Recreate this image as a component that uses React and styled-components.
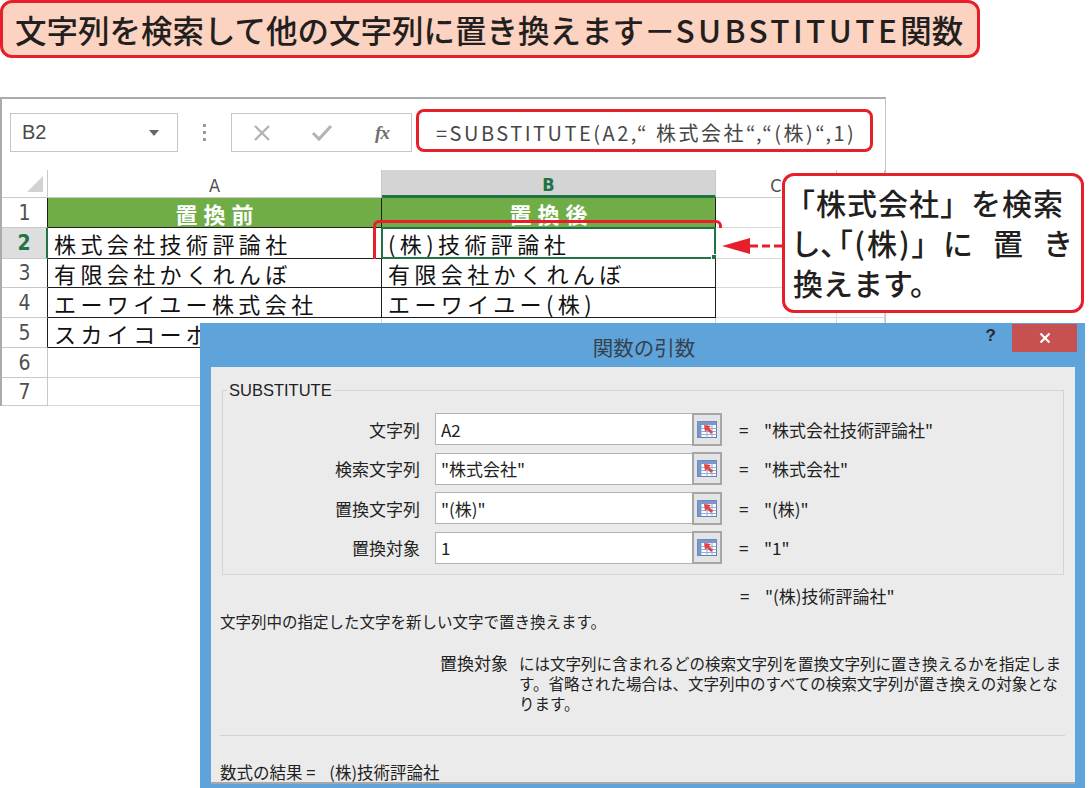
import React from 'react';
import styled, { createGlobalStyle } from 'styled-components';

const JP = `"Noto Sans CJK JP", "Noto Sans", sans-serif`;
const RED = '#e61f2b';
const XL_GREEN = '#217346';

const GlobalStyle = createGlobalStyle`
  html, body {
    margin: 0;
    padding: 0;
    background: #fff;
  }
  body {
    font-family: ${JP};
    color: #231f20;
  }
`;

const Page = styled.div`
  position: relative;
  width: 1091px;
  height: 788px;
  overflow: hidden;
`;

/* ---------- title banner ---------- */

const Banner = styled.h1`
  box-sizing: border-box;
  margin: 0;
  width: 980px;
  height: 58px;
  border: 3px solid ${RED};
  border-radius: 12px;
  background: #fcd3c1;
  display: flex;
  align-items: center;
  padding-left: 12px;
  font-size: 31.5px;
  font-weight: 500;
  white-space: nowrap;
  color: #231f20;
`;

const Latin = styled.span`
  letter-spacing: 3.4px;
`;

/* ---------- excel sheet ---------- */

const Sheet = styled.div`
  box-sizing: border-box;
  margin-top: 39px;
  width: 886px;
  border-top: 2px solid #ababab;
  border-left: 2px solid #ababab;
  border-right: 1px solid #c4c4c4;
`;

const FormulaRow = styled.div`
  box-sizing: border-box;
  height: 71px;
  display: flex;
  align-items: flex-start;
  padding: 14px 0 0 8px;
`;

const NameBox = styled.div`
  box-sizing: border-box;
  width: 168px;
  height: 39px;
  border: 1px solid #c6c6c6;
  display: flex;
  align-items: center;
  padding: 0 18px 0 11px;
  font-family: "Liberation Sans", Arial, sans-serif;
  font-size: 20px;
  color: #4a4a4a;
`;

const Caret = styled.span`
  margin-left: auto;
  width: 0;
  height: 0;
  border-left: 5px solid transparent;
  border-right: 5px solid transparent;
  border-top: 6px solid #666;
`;

const Dots = styled.div`
  width: 53px;
  height: 39px;
  display: flex;
  flex-direction: column;
  align-items: center;
  justify-content: center;
  gap: 4px;

  span {
    width: 3px;
    height: 3px;
    background: #9a9a9a;
  }
`;

const FxBox = styled.div`
  box-sizing: border-box;
  width: 181px;
  height: 39px;
  border: 1px solid #c6c6c6;
  display: grid;
  grid-template-columns: 60px 60px 60px;
  align-items: center;
  justify-items: center;
`;

const FxText = styled.span`
  font-family: "Liberation Serif", "Times New Roman", serif;
  font-style: italic;
  font-weight: 700;
  font-size: 19px;
  color: #6f6f6f;
  letter-spacing: -1px;
`;

const FormulaInput = styled.div`
  box-sizing: border-box;
  margin: -4px 0 0 4px;
  width: 457px;
  height: 43px;
  border: 3px solid ${RED};
  border-radius: 8px;
  display: flex;
  align-items: center;
  padding: 4px 0 0 17px;
  font-size: 20px;
  letter-spacing: 2.5px;
  color: #474747;
  white-space: nowrap;
`;

const Grid = styled.div`
  display: grid;
  grid-template-columns: 46px 334px 334px 121px 48px;
  grid-template-rows: 28px 30px 31px 29px 30px 30px 30px 28px;
`;

const Corner = styled.div`
  box-sizing: border-box;
  border-right: 1px solid #c8c8c8;
  border-bottom: 1px solid #c8c8c8;
  display: flex;
  align-items: flex-end;
  justify-content: flex-end;
  padding: 0 4px 5px 0;

  &::after {
    content: '';
    width: 0;
    height: 0;
    border-left: 16px solid transparent;
    border-bottom: 16px solid #d2d2d2;
  }
`;

const ColHead = styled.div`
  box-sizing: border-box;
  display: flex;
  align-items: center;
  justify-content: center;
  padding-top: 4px;
  background: ${p => (p.$active ? '#d4d4d4' : '#fff')};
  border-right: 1px solid #c8c8c8;
  border-bottom: ${p => (p.$active ? `3px solid ${XL_GREEN}` : '1px solid #c8c8c8')};
  font-family: "DejaVu Sans Condensed", "Liberation Sans", sans-serif;
  font-size: 18px;
  font-weight: ${p => (p.$active ? 700 : 400)};
  color: ${p => (p.$active ? XL_GREEN : '#505050')};
`;

const RowHead = styled.div`
  box-sizing: border-box;
  display: flex;
  align-items: center;
  justify-content: center;
  background: ${p => (p.$active ? '#dedede' : '#fff')};
  border-right: ${p => (p.$active ? `2px solid ${XL_GREEN}` : `1px solid ${p.$edge || '#c8c8c8'}`)};
  border-bottom: 1px solid #c8c8c8;
  font-family: "DejaVu Sans Condensed", "Liberation Sans", sans-serif;
  font-size: 21px;
  font-weight: ${p => (p.$active ? 700 : 400)};
  color: ${p => (p.$active ? XL_GREEN : '#505050')};
`;

const Cell = styled.div`
  box-sizing: border-box;
  position: relative;
  display: flex;
  align-items: center;
  justify-content: ${p => (p.$head ? 'center' : 'flex-start')};
  padding-left: 6px;
  background: ${p => (p.$head ? '#70ad47' : '#fff')};
  border-right: 1px solid ${p => (p.$ruled ? '#1e1e1e' : '#d9d9d9')};
  border-bottom: 1px solid ${p => (p.$ruled || p.$under ? '#1e1e1e' : '#d9d9d9')};
  color: ${p => (p.$head ? '#fff' : '#111')};
  font-size: 22px;
  font-weight: ${p => (p.$head ? 700 : 400)};
  letter-spacing: ${p => (p.$head ? 6 : 4.4)}px;
  white-space: nowrap;
`;

const ActiveFrame = styled.span`
  position: absolute;
  left: -1px;
  top: -1px;
  right: -1px;
  bottom: -1px;
  border: 2px solid ${XL_GREEN};

  &::after {
    content: '';
    position: absolute;
    right: -5px;
    bottom: -5px;
    width: 6px;
    height: 6px;
    background: ${XL_GREEN};
    border: 1px solid #fff;
  }
`;

const RedRing = styled.span`
  position: absolute;
  left: -9px;
  right: -7px;
  top: -8px;
  bottom: -7px;
  border: 3px solid ${RED};
  border-radius: 6px;
`;

/* ---------- annotation ---------- */

const Callout = styled.div`
  position: absolute;
  left: 782px;
  top: 173px;
  box-sizing: border-box;
  width: 302px;
  height: 140px;
  border: 3px solid ${RED};
  border-radius: 12px;
  background: #fff;
  padding: 6px 0 0 8px;
  font-size: 30px;
  font-weight: 500;
  line-height: 40px;
  color: #231f20;
  white-space: nowrap;
`;

const CalloutLine = styled.div`
  margin-left: ${p => p.$shift || 0}px;
  letter-spacing: ${p => p.$track || 0}px;
`;

/* second line: tight lead-in, then three evenly spread characters */
const SpreadLine = styled.div`
  display: grid;
  grid-template-columns: 150px 50px 50px 50px;
`;

const Tight = styled.span`
  font-feature-settings: "palt";
  letter-spacing: 2px;
`;

const Arrow = styled.svg`
  position: absolute;
  left: 720px;
  top: 236px;
`;

/* ---------- function arguments dialog ---------- */

const Dialog = styled.section`
  position: absolute;
  left: 200px;
  top: 323px;
  box-sizing: border-box;
  width: 885px;
  height: 470px;
  background: #5fa3db;
  padding: 0 10px 0 11px;
  display: flex;
  flex-direction: column;
  font-family: ${JP};
  color: #222;
`;

const TitleBar = styled.header`
  height: 44px;
  display: grid;
  grid-template-columns: 1fr auto 1fr;
  margin-right: -2px;
`;

const Title = styled.div`
  grid-column: 2;
  align-self: center;
  padding-top: 4px;
  font-size: 20.5px;
  color: #35414d;
`;

const Controls = styled.div`
  display: flex;
  justify-content: flex-end;
  align-items: flex-start;
`;

const Help = styled.span`
  margin: 3px 16px 0 0;
  font-family: "Liberation Sans", Arial, sans-serif;
  font-weight: 700;
  font-size: 17px;
  color: #2a2a2a;
`;

const CloseButton = styled.div`
  margin-top: 1px;
  width: 65px;
  height: 28px;
  background: #c75050;
  display: flex;
  align-items: center;
  justify-content: center;
`;

const Body = styled.div`
  height: 415px;
  background: #ebebeb;
  display: flex;
  flex-direction: column;
  border-bottom: 2px solid #a8a8a8;
`;

const Group = styled.fieldset`
  margin: 13px 11px 0 11px;
  padding: 13px 0 10px 0;
  border: 1px solid #d4d4d4;
  display: flex;
  flex-direction: column;
  gap: 7.5px;
`;

const Legend = styled.legend`
  margin-left: 4px;
  padding: 0 2px;
  font-family: "Liberation Sans", Arial, sans-serif;
  font-size: 16.5px;
  line-height: 20px;
  color: #222;
`;

const ArgRow = styled.div`
  display: flex;
  align-items: center;
  height: 32px;
`;

const ArgLabel = styled.div`
  width: 197px;
  text-align: right;
  font-size: 17px;
`;

const ArgInput = styled.div`
  box-sizing: border-box;
  margin-left: 15px;
  width: 257px;
  height: 32px;
  background: #fff;
  border: 1px solid #b3b3b3;
  border-right: none;
  display: flex;
  align-items: center;
  padding-left: 5px;
  font-size: 17px;
`;

const RefButton = styled.div`
  box-sizing: border-box;
  width: 30px;
  height: 33px;
  border: 2px solid #a6a6a6;
  background: #e4e4e4;
  display: flex;
  align-items: center;
  justify-content: center;
`;

const Eq = styled.span`
  margin-left: 17px;
  width: 25px;
  font-size: 17px;
`;

const ArgValue = styled.span`
  font-size: 17px;
`;

const ResultRow = styled.div`
  display: flex;
  align-items: center;
  height: 20px;
  margin-top: 11px;
  padding-left: 512px;
`;

const Summary = styled.p`
  margin: 5px 0 0 9px;
  font-size: 15.5px;
  line-height: 20px;
`;

const ArgHelp = styled.div`
  display: flex;
  align-items: flex-start;
  margin: 22px 0 0 229px;
`;

const HelpName = styled.span`
  width: 68px;
  font-size: 17px;
  line-height: 20px;
  white-space: nowrap;
`;

const HelpText = styled.p`
  margin: 0 0 0 11px;
  width: 545px;
  font-size: 15.5px;
  line-height: 20px;
`;

const Rule = styled.hr`
  margin: auto 10px 0 9px;
  border: none;
  border-top: 1px solid #d2d2d2;
`;

const Footer = styled.div`
  margin: 26px 0 0 9px;
  height: 20px;
  display: flex;
  align-items: center;
  font-size: 16.5px;
  white-space: nowrap;
`;

const FooterValue = styled.span`
  margin-left: 14px;
`;

/* ---------- icons ---------- */

const CrossIcon = () => (
  <svg width="18" height="18" viewBox="0 0 18 18">
    <path d="M2 2 L16 16 M16 2 L2 16" stroke="#b3b3b3" strokeWidth="2.4" />
  </svg>
);

const CheckIcon = () => (
  <svg width="22" height="18" viewBox="0 0 22 18">
    <path d="M2 9 L8 15 L20 2" stroke="#b3b3b3" strokeWidth="3" fill="none" />
  </svg>
);

const CloseIcon = () => (
  <svg width="12" height="12" viewBox="0 0 12 12">
    <path d="M1.5 1.5 L10.5 10.5 M10.5 1.5 L1.5 10.5" stroke="#fff" strokeWidth="2.2" />
  </svg>
);

const RefIcon = () => (
  <svg width="20" height="17" viewBox="0 0 20 17">
    <rect x="0.5" y="0.5" width="19" height="16" fill="#fff" stroke="#5a7fb8" />
    <rect x="0.5" y="0.5" width="19" height="3.5" fill="#7a97cc" />
    <rect x="0.5" y="0.5" width="4" height="16" fill="#7a97cc" />
    <path d="M4.5 7.5 H19.5 M4.5 10.5 H19.5 M4.5 13.5 H19.5 M10 4 V16.5 M15 4 V16.5" stroke="#8fabd9" strokeWidth="1" />
    <path d="M7 4 L14 5 L12 7 L16 11 L14 13 L10 9 L8 11 Z" fill="#e8413f" />
  </svg>
);

/* ---------- data ---------- */

const rows = [
  { n: 1, a: '置換前', b: '置換後', head: true },
  { n: 2, a: '株式会社技術評論社', b: '(株)技術評論社', active: true },
  { n: 3, a: '有限会社かくれんぼ', b: '有限会社かくれんぼ' },
  { n: 4, a: 'エーワイユー株式会社', b: 'エーワイユー(株)' },
  { n: 5, a: 'スカイコーポレーション', b: 'スカイコーポ(株)', last: true },
  { n: 6 },
  { n: 7 },
];

const args = [
  { label: '文字列', input: 'A2', value: '"株式会社技術評論社"' },
  { label: '検索文字列', input: '"株式会社"', value: '"株式会社"' },
  { label: '置換文字列', input: '"(株)"', value: '"(株)"' },
  { label: '置換対象', input: '1', value: '"1"' },
];

const SheetRow = ({ row }) => {
  const data = row.a !== undefined;
  return (
    <>
      <RowHead $active={row.active} $edge={data ? '#1e1e1e' : undefined}>{row.n}</RowHead>
      <Cell $head={row.head} $ruled={data && !row.last} $under={row.last}>{row.a}</Cell>
      <Cell $head={row.head} $ruled={data && !row.last}>
        {row.b}
        {row.active && <ActiveFrame />}
        {row.active && <RedRing />}
      </Cell>
      <Cell />
      <Cell />
    </>
  );
};

export default function App() {
  return (
    <Page>
      <GlobalStyle />
      <Banner>
        文字列を検索して他の文字列に置き換えます－<Latin>SUBSTITUTE</Latin>関数
      </Banner>

      <Sheet>
        <FormulaRow>
          <NameBox>
            B2
            <Caret />
          </NameBox>
          <Dots>
            <span />
            <span />
            <span />
          </Dots>
          <FxBox>
            <CrossIcon />
            <CheckIcon />
            <FxText>fx</FxText>
          </FxBox>
          <FormulaInput>=SUBSTITUTE(A2,“ 株式会社“,“(株)“,1)</FormulaInput>
        </FormulaRow>
        <Grid>
          <Corner />
          <ColHead>A</ColHead>
          <ColHead $active>B</ColHead>
          <ColHead>C</ColHead>
          <ColHead />
          {rows.map(r => (
            <SheetRow key={r.n} row={r} />
          ))}
        </Grid>
      </Sheet>

      <Arrow width="62" height="20" viewBox="0 0 62 20">
        <polygon points="2,10 30,2 30,18" fill={RED} />
        <line x1="30" y1="10" x2="62" y2="10" stroke={RED} strokeWidth="3" strokeDasharray="8 4" />
      </Arrow>
      <Callout>
        <CalloutLine $shift={-8} $track={1}>「株式会社」を検索</CalloutLine>
        <SpreadLine>
          <Tight>し、「(株)」</Tight>
          <span>に</span>
          <span>置</span>
          <span>き</span>
        </SpreadLine>
        <CalloutLine>換えます。</CalloutLine>
      </Callout>

      <Dialog>
        <TitleBar>
          <Title>関数の引数</Title>
          <Controls>
            <Help>?</Help>
            <CloseButton>
              <CloseIcon />
            </CloseButton>
          </Controls>
        </TitleBar>
        <Body>
          <Group>
            <Legend>SUBSTITUTE</Legend>
            {args.map(a => (
              <ArgRow key={a.label}>
                <ArgLabel>{a.label}</ArgLabel>
                <ArgInput>{a.input}</ArgInput>
                <RefButton>
                  <RefIcon />
                </RefButton>
                <Eq>=</Eq>
                <ArgValue>{a.value}</ArgValue>
              </ArgRow>
            ))}
          </Group>
          <ResultRow>
            <Eq>=</Eq>
            <ArgValue>"(株)技術評論社"</ArgValue>
          </ResultRow>
          <Summary>文字列中の指定した文字を新しい文字で置き換えます。</Summary>
          <ArgHelp>
            <HelpName>置換対象</HelpName>
            <HelpText>
              には文字列に含まれるどの検索文字列を置換文字列に置き換えるかを指定します。省略された場合は、文字列中のすべての検索文字列が置き換えの対象となります。
            </HelpText>
          </ArgHelp>
          <Rule />
          <Footer>
            数式の結果 =<FooterValue>(株)技術評論社</FooterValue>
          </Footer>
        </Body>
      </Dialog>
    </Page>
  );
}
